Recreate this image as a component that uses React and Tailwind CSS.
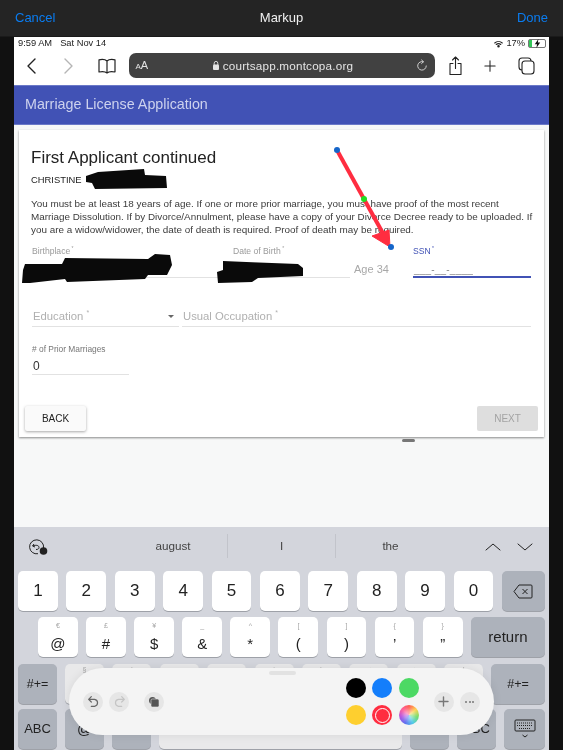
import React from "react";

const numberKeys = ["1", "2", "3", "4", "5", "6", "7", "8", "9", "0"];
const symbolKeys = [
  ["€", "@"],
  ["£", "#"],
  ["¥", "$"],
  ["_", "&"],
  ["^", "*"],
  ["[", "("],
  ["]", ")"],
  ["{", "’"],
  ["}", "”"],
];
const thirdRow = ["§", "|", "~", "…", "^", "\\", "<", ">", "!"];

const Icon = ({ className, children, viewBox = "0 0 24 24", fill = "none", stroke = "currentColor", strokeWidth = 1.5 }) => (
  <svg className={className} viewBox={viewBox} fill={fill} stroke={stroke} strokeWidth={strokeWidth} strokeLinecap="round" strokeLinejoin="round">
    {children}
  </svg>
);

const TopBar = () => (
  <div className="h-[37px] bg-[#242424] border-b border-[#1a1a1a] grid grid-cols-3 items-center px-[15px] pb-[1px] text-[13px]">
    <span className="text-[#0a7cf0]">Cancel</span>
    <span className="text-[#f0f0f0] font-medium text-center">Markup</span>
    <span className="text-[#0a7cf0] font-medium text-right">Done</span>
  </div>
);

const StatusBar = () => (
  <div className="h-[16px] bg-white flex items-center justify-between pl-[4px] pr-[3px] pb-[3px] text-[9.300px] text-[#222]">
    <div className="flex gap-[8px]">
      <span>9:59 AM</span>
      <span>Sat Nov 14</span>
    </div>
    <div className="flex items-center gap-[3px]">
      <Icon className="w-[9px] h-[8px]" viewBox="0 0 18 14" strokeWidth={2.2}>
        <path d="M1.500 5a11 11 0 0 1 15 0M4.500 8a7 7 0 0 1 9 0" />
        <circle cx="9" cy="11.500" r="1.400" fill="currentColor" />
      </Icon>
      <span>17%</span>
      <div className="w-[18px] h-[9px] rounded-[2px] border border-[#777] relative flex items-center">
        <div className="w-[3px] h-full bg-[#35c759]" />
        <svg className="absolute left-[5px] top-[-1px] w-[7px] h-[9px]" viewBox="0 0 6 8" fill="#111">
          <path d="M3.800 0 .6 4.600h2L2 8l3.400-4.800H3.300z" />
        </svg>
      </div>
    </div>
  </div>
);

const Toolbar = () => (
  <div className="h-[32px] bg-white flex items-center pb-[7px] text-[#222]">
    <Icon className="w-[16px] h-[18px] ml-[10px]" viewBox="0 0 16 18" strokeWidth={1.4}>
      <path d="M11 2 4 9l7 7" />
    </Icon>
    <Icon className="w-[16px] h-[18px] ml-[20px] text-[#b5b5b5]" viewBox="0 0 16 18" strokeWidth={1.4}>
      <path d="m5 2 7 7-7 7" />
    </Icon>
    <Icon className="w-[20px] h-[18px] ml-[21px]" viewBox="0 0 20 18" strokeWidth={1.2}>
      <path d="M10 4C8.500 2.600 5 2.200 2 2.800V15c3-.6 6.500-.3 8 1 1.500-1.300 5-1.600 8-1V2.800C15 2.200 11.500 2.600 10 4zM10 4v12" />
    </Icon>
    <div className="w-[306px] h-[25px] ml-[11.500px] rounded-[7px] bg-[#414141] flex items-center text-[#e4e4e4] relative">
      <span className="ml-[7px] text-[8px]">A<span className="text-[11px]">A</span></span>
      <div className="absolute inset-0 flex items-center justify-center pl-[3px] gap-[4px] text-[11.700px] tracking-[0.2px]">
        <svg className="w-[6px] h-[9px]" viewBox="0 0 6 9" fill="#e4e4e4">
          <rect x="0" y="3.500" width="6" height="5.500" rx="1" />
          <path d="M1.200 4V2.200a1.800 1.800 0 0 1 3.600 0V4" fill="none" stroke="#e4e4e4" strokeWidth="0.9" />
        </svg>
        <span>courtsapp.montcopa.org</span>
      </div>
      <Icon className="w-[12px] h-[13px] ml-auto mr-[7px] relative" viewBox="0 0 14 15" strokeWidth={1}>
        <path d="M8.500 3.100A5 5 0 1 0 12 8M6.500 1l2.200 2.100L6.500 5.200" />
      </Icon>
    </div>
    <Icon className="w-[15px] h-[20px] ml-[13px]" viewBox="0 0 15 20" strokeWidth={1.1}>
      <path d="M7.500 12.500V1.500M4.500 4l3-3 3 3M5 7.500H2v11h11v-11h-3" />
    </Icon>
    <Icon className="w-[12px] h-[12px] ml-[21.500px]" viewBox="0 0 14 14" strokeWidth={1.2}>
      <path d="M7 1v12M1 7h12" />
    </Icon>
    <Icon className="w-[17px] h-[18px] ml-[22px]" viewBox="0 0 17 18" strokeWidth={1.1}>
      <rect x="1" y="1" width="12" height="12" rx="3" />
      <rect x="4" y="4" width="12" height="13" rx="3" fill="#fff" />
    </Icon>
  </div>
);

const FieldLabel = ({ children, className = "text-[#9a9a9a]" }) => (
  <div className={`text-[8.600px] leading-[10px] ${className}`}>
    {children}
    <span className="text-[5px] align-super"> *</span>
  </div>
);

const Card = () => (
  <div className="h-[307px] w-[525px] bg-white shadow-[0_1px_2px_rgba(0,0,0,0.45)] flex flex-col">
    <div className="pl-[12px] pr-[5px] pt-[17px] text-[#3b3b3b]">
      <h1 className="text-[17px] leading-[22px] text-[#222]">First Applicant continued</h1>
      <p className="mt-[5px] text-[9.400px] leading-[11px] text-[#222]">CHRISTINE</p>
      <p className="mt-[12px] text-[9.900px] leading-[13px]">
        You must be at least 18 years of age. If one or more prior marriage, you must have proof of the most recent Marriage Dissolution. If by Divorce/Annulment, please have a copy of your Divorce Decree ready to be uploaded. If you are a widow/widower, the date of death is required. Proof of death may be required.
      </p>
    </div>

    <div className="flex mt-[7px] ml-[13px] h-[35px]">
      <div className="w-[201px] border-b border-[#e2e2e2]">
        <FieldLabel>Birthplace</FieldLabel>
      </div>
      <div className="w-[117px] border-b border-[#e2e2e2]">
        <FieldLabel>Date of Birth</FieldLabel>
      </div>
      <div className="w-[63px] flex items-end pb-[2px] pl-[4px] text-[11px] text-[#a8a8a8] bg-white mb-[-1px]">Age 34</div>
      <div className="w-[118px] border-b-2 border-b-[#4152b5] flex flex-col justify-between">
        <FieldLabel className="text-[#4152b5]">SSN</FieldLabel>
        <span className="text-[10px] leading-[12px] text-[#8a8a8a] pl-[1px] tracking-[0.2px]">___-__-____</span>
      </div>
    </div>

    <div className="flex mt-[29px] ml-[13px] h-[20px] gap-[3px] text-[11.300px] text-[#b0b0b0]">
      <div className="w-[147px] border-b border-[#e2e2e2] flex items-center justify-between pl-[1px] pr-[5px]">
        <span>Education <span className="text-[7px] align-super">*</span></span>
        <span className="w-0 h-0 border-x-[3.500px] border-x-transparent border-t-[3.500px] border-t-[#666]" />
      </div>
      <div className="w-[349px] border-b border-[#e2e2e2] flex items-center pl-[1px]">
        <span>Usual Occupation <span className="text-[7px] align-super">*</span></span>
      </div>
    </div>

    <div className="mt-[17px] ml-[13px] w-[97px] h-[31px] border-b border-[#e2e2e2] flex flex-col">
      <span className="text-[8.400px] leading-[10px] text-[#777]">{"# of Prior Marriages"}</span>
      <span className="text-[12px] leading-[14px] mt-[5px] pl-[1px] text-[#333]">0</span>
    </div>

    <div className="flex justify-between mt-[31px] ml-[6px] mr-[6px] text-[10px] font-medium">
      <div className="w-[61px] h-[25px] bg-[#fafafa] rounded-[2px] shadow-[0_1px_3px_rgba(0,0,0,0.35)] flex items-center justify-center text-[#222]">BACK</div>
      <div className="w-[61px] h-[25px] bg-[#dedede] rounded-[2px] flex items-center justify-center text-[#a3a3a3]">NEXT</div>
    </div>
  </div>
);

const Key = ({ className = "", children }) => (
  <div className={`h-[40px] rounded-[5px] flex items-center justify-center shadow-[0_1px_0_#9ea1a8] ${className}`}>{children}</div>
);

const Keyboard = () => (
  <div className="flex-1 bg-[#d3d5dc] flex flex-col">
    <div className="h-[44px] flex items-center pb-[4px] relative">
      <svg className="w-[20px] h-[18px] ml-[15px]" viewBox="0 0 20 18" fill="none" stroke="#222" strokeWidth="1">
        <path d="M14.500 10A7 7 0 1 0 9 15.700" />
        <path d="m5 6-1.500 2L6 9M4 7.800c3-1 6-.6 6 1.700 0 1.300-1 2-3 2" />
        <circle cx="14.500" cy="13" r="3.800" fill="#222" stroke="none" />
      </svg>
      <div className="absolute left-[100px] top-[7px] flex h-[24px] text-[11.700px] text-[#444]">
        <div className="w-[113px] flex items-center justify-center pl-[5px]">august</div>
        <div className="w-[109px] flex items-center justify-center border-x border-[#c2c4cb]">I</div>
        <div className="w-[109px] flex items-center justify-center">the</div>
      </div>
      <Icon className="w-[16px] h-[10px] ml-auto text-[#222]" viewBox="0 0 16 10" strokeWidth={1}>
        <path d="m1 8 7-6 7 6" />
      </Icon>
      <Icon className="w-[16px] h-[10px] ml-[16px] mr-[16px] text-[#222]" viewBox="0 0 16 10" strokeWidth={1}>
        <path d="m1 2 7 6 7-6" />
      </Icon>
    </div>

    <div className="flex pl-[4px] pr-[4px] gap-[8.500px]">
      {numberKeys.map((k) => (
        <Key key={k} className="w-[39.900px] bg-white text-[17px] text-[#222]">{k}</Key>
      ))}
      <Key className="flex-1 bg-[#adb2bb]">
        <svg className="w-[20px] h-[15px]" viewBox="0 0 20 15" fill="none" stroke="#222" strokeWidth="1">
          <path d="M6 1h12a1 1 0 0 1 1 1v11a1 1 0 0 1-1 1H6L1 7.500zM9.500 5l5 5M14.500 5l-5 5" />
        </svg>
      </Key>
    </div>

    <div className="flex mt-[6px] pl-[24px] pr-[4px] gap-[8.300px]">
      {symbolKeys.map(([top, main]) => (
        <Key key={main} className="w-[39.800px] h-[38px] bg-white flex-col justify-start pt-[4px] text-[#222]">
          <span className="text-[7px] leading-[9px] text-[#a5a5a5]">{top}</span>
          <span className="mt-[5px] text-[15px] leading-[17px]">{main}</span>
        </Key>
      ))}
      <Key className="flex-1 h-[38px] bg-[#adb2bb] text-[15px] text-[#222]">return</Key>
    </div>

    <div className="flex mt-[7px] pl-[4px] pr-[4px] gap-[8px]">
      <Key className="w-[39px] h-[39px] bg-[#adb2bb] text-[12.500px] text-[#222]">#+=</Key>
      <div className="flex gap-[8.400px]">
        {thirdRow.map((k) => (
          <Key key={k} className="w-[39px] h-[39px] bg-[#e9e9ea] flex-col justify-start pt-[1px] text-[7px] text-[#a5a5a5]">{k}</Key>
        ))}
      </div>
      <Key className="flex-1 h-[39px] bg-[#adb2bb] text-[12.500px] text-[#222]">#+=</Key>
    </div>

    <div className="flex mt-[5px] pl-[4px] pr-[4px] gap-[8px]">
      <Key className="w-[39px] h-[39px] bg-[#adb2bb] text-[13px] text-[#222]">ABC</Key>
      <Key className="w-[39px] h-[39px] bg-[#adb2bb] text-[15px] text-[#222]">@</Key>
      <Key className="w-[39px] h-[39px] bg-[#adb2bb]" />
      <Key className="w-[243px] h-[39px] bg-[#e9e9ea]" />
      <Key className="w-[39px] h-[39px] bg-[#adb2bb]" />
      <Key className="w-[39px] h-[39px] bg-[#adb2bb] text-[13px] text-[#222]">ABC</Key>
      <Key className="flex-1 h-[39px] bg-[#adb2bb] flex-col">
        <svg className="w-[22px] h-[22px]" viewBox="0 0 22 22" fill="none" stroke="#222" strokeWidth="1">
          <rect x="1" y="2" width="20" height="11" rx="1" />
          <path d="M3 5h16M3 7.500h16M5 10.500h12" strokeDasharray="1 1" />
          <path d="m8.500 17 2.500 2 2.500-2" />
        </svg>
      </Key>
    </div>
  </div>
);

const RoundButton = ({ className = "", children }) => (
  <div className={`w-[20px] h-[20px] rounded-full bg-[#e6e6e6] flex items-center justify-center ${className}`}>{children}</div>
);

// floating markup palette over the keyboard
const MarkupTools = () => (
  <div className="absolute left-[69px] top-[668px] w-[425px] h-[67px] rounded-[34px] bg-[#f4f4f4] shadow-[0_0_10px_rgba(0,0,0,0.08)] flex items-center">
    <div className="absolute left-[200px] top-[3px] w-[27px] h-[4px] rounded-full bg-[#e2e2e2]" />
    <RoundButton className="ml-[14px]">
      <Icon className="w-[13px] h-[13px] text-[#666]" viewBox="0 0 12 12" strokeWidth={1.1}>
        <path d="M4 1.500 1.500 4 4 6.500M1.500 4H7a3.300 3.300 0 0 1 0 6.500H4" />
      </Icon>
    </RoundButton>
    <RoundButton className="ml-[6px]">
      <Icon className="w-[13px] h-[13px] text-[#c4c4c4]" viewBox="0 0 12 12" strokeWidth={1.1}>
        <path d="M8 1.500 10.500 4 8 6.500M10.500 4H5a3.300 3.300 0 0 0 0 6.500h3" />
      </Icon>
    </RoundButton>
    <RoundButton className="ml-[15px]">
      <svg className="w-[12px] h-[12px]" viewBox="0 0 12 12" fill="#555">
        <circle cx="4.500" cy="4.500" r="3.500" />
        <rect x="3" y="3" width="8" height="8" rx="1.500" stroke="#e6e6e6" strokeWidth="0.6" />
      </svg>
    </RoundButton>
    <div className="ml-[181.500px] grid grid-cols-3 gap-x-[6.500px] gap-y-[7px]">
      <div className="w-[20px] h-[20px] rounded-full bg-black" />
      <div className="w-[20px] h-[20px] rounded-full bg-[#147efb]" />
      <div className="w-[20px] h-[20px] rounded-full bg-[#4cd964]" />
      <div className="w-[20px] h-[20px] rounded-full bg-[#fecf2f]" />
      <div className="w-[20px] h-[20px] rounded-full bg-[#ff2d40] flex items-center justify-center">
        <div className="w-[15px] h-[15px] rounded-full border border-white" />
      </div>
      <div className="w-[20px] h-[20px] rounded-full bg-[conic-gradient(#ff5a4d,#ffd34d,#6fdc6a,#4cc9e8,#5a6cf0,#b04fe0,#ff5a9a,#ff5a4d)] flex items-center justify-center">
        <div className="w-[12px] h-[12px] rounded-full bg-white/50 blur-[2px]" />
      </div>
    </div>
    <RoundButton className="ml-[15px]">
      <Icon className="w-[11px] h-[11px] text-[#777]" viewBox="0 0 11 11" strokeWidth={1.4}>
        <path d="M5.500 1v9M1 5.500h9" />
      </Icon>
    </RoundButton>
    <RoundButton className="ml-[6px] gap-[1.500px]">
      <div className="w-[2px] h-[2px] rounded-full bg-[#777]" />
      <div className="w-[2px] h-[2px] rounded-full bg-[#777]" />
      <div className="w-[2px] h-[2px] rounded-full bg-[#777]" />
    </RoundButton>
  </div>
);

// redaction scribbles and the annotation arrow drawn on the screenshot
const Annotations = () => (
  <svg className="absolute left-0 top-0 w-[563px] h-[750px]" viewBox="0 0 563 750" fill="none">
    <g fill="#0a0a0a">
      <path d="M86 176 98 172 144 169 145 175 166 176 167 188 95 189 92 183 86 182z" />
      <path d="M25 264 62 264 65 258 148 259 155 254 170 255 172 265 167 275 148 275 145 279 67 282 65 279 30 283 22 283 23 270z" />
      <path d="M223 261 298 264 303 268 303 276 258 278 252 282 218 283 217 272 223 270z" />
    </g>
    <rect x="402" y="439" width="13" height="3" rx="1.500" fill="#777" />
    <path d="m338 152 47 85" stroke="#ff2d40" strokeWidth="4" />
    <path d="M372 236 389 230 390 247z" fill="#ff2d40" stroke="#ff2d40" strokeWidth="1" strokeLinejoin="round" />
    <circle cx="337" cy="150" r="3" fill="#1565c9" />
    <circle cx="364" cy="199" r="3" fill="#22dd22" />
    <circle cx="391" cy="247" r="3" fill="#1565c9" />
  </svg>
);

export default function App() {
  return (
    <div className="relative w-[563px] h-[750px] overflow-hidden bg-[#111] font-['Liberation_Sans',Arial,sans-serif] blur-[0.5px]">
      <TopBar />
      <div className="ml-[14px] w-[535px] h-[713px] flex flex-col bg-[#f7f8f8]">
        <StatusBar />
        <Toolbar />
        <div className="h-[40px] bg-[#4152b5] border-y border-[#6b79c8] flex items-center pl-[11px] text-[14.300px] text-[#cdd2ee]">
          Marriage License Application
        </div>
        <div className="h-[402px] pl-[5px] pt-[5px] bg-[#f7f8f8]">
          <Card />
        </div>
        <Keyboard />
      </div>
      <MarkupTools />
      <Annotations />
    </div>
  );
}
